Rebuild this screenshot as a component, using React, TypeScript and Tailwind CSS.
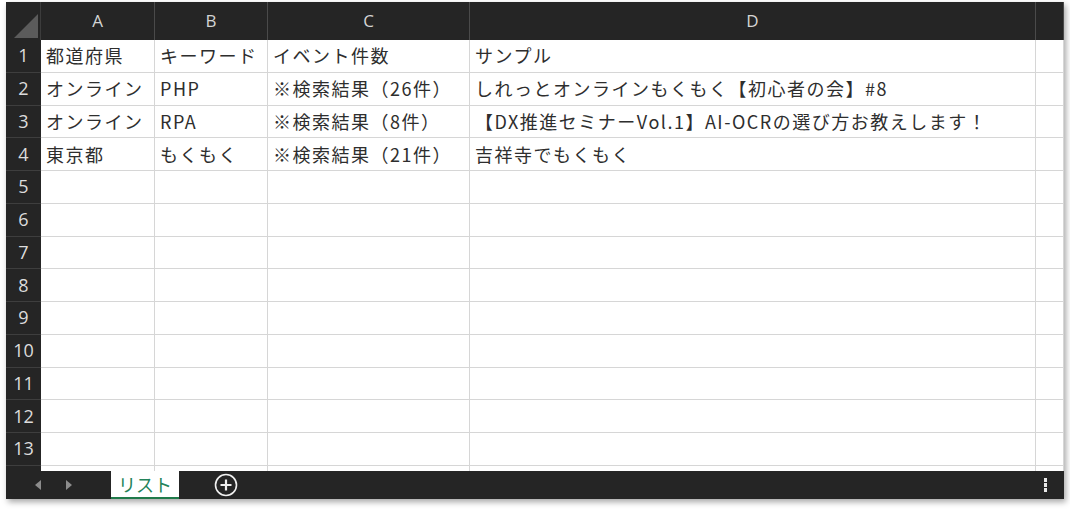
import React from 'react'

const cols = [
  { key: 'A', w: 'w-[114px]' },
  { key: 'B', w: 'w-[113px]' },
  { key: 'C', w: 'w-[202px]' },
  { key: 'D', w: 'w-[566px]' },
  { key: '', w: 'w-[28px]' },
]

const data: string[][] = [
  ['都道府県', 'キーワード', 'イベント件数', 'サンプル'],
  ['オンライン', 'PHP', '※検索結果（26件）', 'しれっとオンラインもくもく【初心者の会】#8'],
  ['オンライン', 'RPA', '※検索結果（8件）', '【DX推進セミナーVol.1】AI-OCRの選び方お教えします！'],
  ['東京都', 'もくもく', '※検索結果（21件）', '吉祥寺でもくもく'],
]

// 14th row only peeks out under the tab bar
const rowCount = 14

export default function App() {
  return (
    <div className="h-[510px] w-[1070px] bg-white pl-[6px] pt-[2px]">
      <div className="flex h-[497px] w-[1058px] flex-col overflow-hidden bg-[#252525] shadow-[2px_3px_6px_rgba(0,0,0,0.35)]">
        {/* column headers */}
        <div className="flex h-[38px] shrink-0">
          <div className="relative w-[35px] shrink-0 border-r border-[#3c3c3c]">
            <svg className="absolute left-[8px] top-[12px]" width="24" height="24" viewBox="0 0 24 24">
              <polygon points="24,0 24,24 0,24" fill="#5b5b5b" />
            </svg>
          </div>
          {cols.map((c, i) => (
            <div
              key={i}
              className={`${c.w} flex shrink-0 items-center justify-center border-r border-[#4a4a4a] text-[17px] text-[#d4d4d4]`}
              style={{ fontFamily: '"Open Sans", "Noto Sans", sans-serif' }}
            >
              {c.key}
            </div>
          ))}
        </div>

        {/* grid */}
        <div className="h-[431px] shrink-0 overflow-hidden">
          {Array.from({ length: rowCount }).map((_, r) => (
            <div key={r} className="flex h-[32.75px]">
              <div
                className="flex w-[35px] shrink-0 items-center justify-center border-b border-[#3e3e3e] text-[18px] text-[#dcdcdc]"
                style={{ fontFamily: '"Open Sans", "Noto Sans", sans-serif' }}
              >
                {r < 13 ? r + 1 : ''}
              </div>
              {cols.map((c, ci) => (
                <div
                  key={ci}
                  className={`${c.w} flex shrink-0 items-center overflow-visible whitespace-nowrap border-b border-r border-[#d6d6d6] bg-white pl-[5px] text-[18px] tracking-[1.5px] text-[#2e2e2e]`}
                  style={{ fontFamily: '"Noto Sans CJK JP", "Noto Sans", sans-serif' }}
                >
                  {data[r]?.[ci] ?? ''}
                </div>
              ))}
            </div>
          ))}
        </div>

        {/* sheet tabs */}
        <div className="flex h-[28px] shrink-0 items-center">
          <div className="flex w-[105px] items-center gap-[23px] pl-[28px]">
            <svg width="8" height="10" viewBox="0 0 8 10">
              <polygon points="7,0 7,10 1,5" fill="#8c8c8c" />
            </svg>
            <svg width="8" height="10" viewBox="0 0 8 10">
              <polygon points="1,0 1,10 7,5" fill="#8c8c8c" />
            </svg>
          </div>
          <div
            className="flex h-full w-[68px] items-center justify-center border-b-2 border-[#1f7a4a] bg-white text-[18px] text-[#23835a]"
            style={{ fontFamily: '"Noto Sans CJK JP", sans-serif' }}
          >
            リスト
          </div>
          <div className="ml-[35px]">
            <svg width="24" height="24" viewBox="0 0 24 24">
              <circle cx="12" cy="12" r="10.5" fill="none" stroke="#f0f0f0" strokeWidth="1.6" />
              <path d="M12 6.5v11M6.5 12h11" stroke="#f0f0f0" strokeWidth="2.2" />
            </svg>
          </div>
          <div className="ml-auto mr-[17px] flex flex-col gap-[1.5px]">
            <div className="h-[3.5px] w-[3.5px] bg-[#e8e8e8]" />
            <div className="h-[3.5px] w-[3.5px] bg-[#e8e8e8]" />
            <div className="h-[3.5px] w-[3.5px] bg-[#e8e8e8]" />
          </div>
        </div>
      </div>
    </div>
  )
}
